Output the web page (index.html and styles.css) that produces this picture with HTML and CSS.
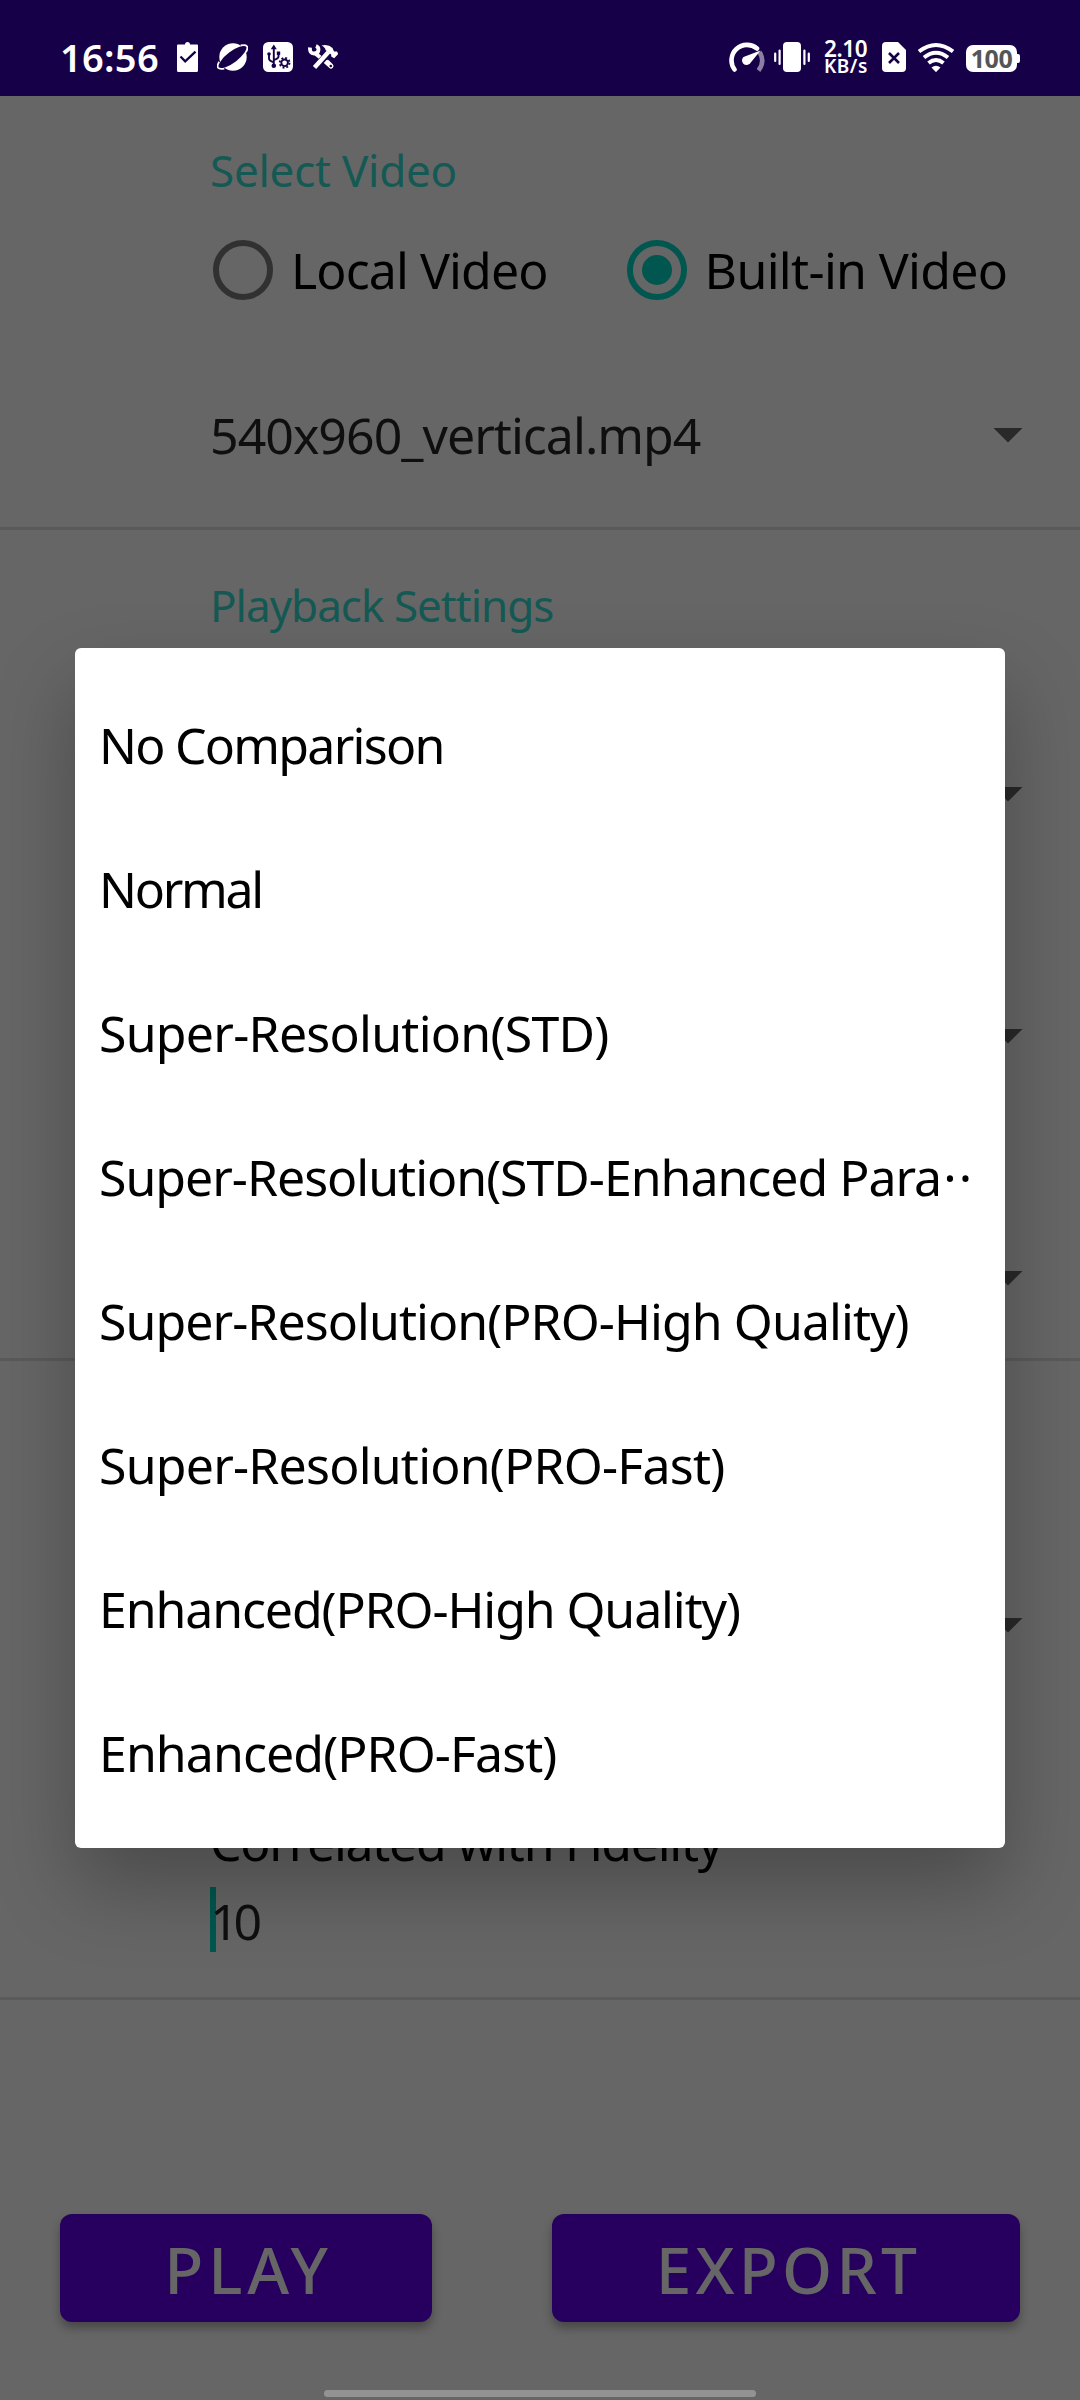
FILE: index.html
```
<!DOCTYPE html>
<html lang="en">
<head>
<meta charset="utf-8">
<title>Video settings</title>
<link rel="stylesheet" href="styles.css">
</head>
<body>
<div class="screen">
  <header class="status">
    <div class="status-left">
      <span class="time">16:56</span>
      <svg class="clip" width="21" height="30" viewBox="177 42 21 30"><path fill="#fff" d="M178 44.5h7q0-2.500 2.500-2.500t2.500 2.500h7q1 0 1 1V70.500q0 1.500-1.500 1.500h-18q-1.500 0-1.500-1.500V45.500q0-1 1-1z"/><path fill="none" stroke="#160048" stroke-width="2.300" d="M180.500 56.500l4.700 4.900 10.300-9.800"/></svg>
      <svg width="31" height="30" viewBox="217 42 31 30"><circle cx="233" cy="57" r="13.700" fill="#fff"/><g transform="rotate(-37 232.500 57)"><ellipse cx="232.500" cy="57" rx="16.500" ry="5.500" fill="#160048"/><path fill="none" stroke="#fff" stroke-width="1.800" d="M219 52.700q-4.500 2-4.500 4.300t4.500 4.300M246 52.700q4.500 2 4.500 4.300t-4.500 4.300"/></g></svg>
      <svg width="30" height="30" viewBox="263 42 30 30"><rect x="263" y="42" width="30" height="30" rx="5.500" fill="#fff"/><g fill="none" stroke="#160048" stroke-width="1.900"><path d="M273.800 48v17.500M269 54v4.500q0 2.500 4.800 3.800M278.500 53v3.500q0 2-4.700 3.600"/><circle cx="284.600" cy="62.800" r="3.300"/><circle cx="284.600" cy="62.800" r="4.900" stroke-dasharray="1.900 1.950"/></g><g fill="#160048"><path d="M273.800 44.500l3 4.700h-6z"/><circle cx="269" cy="54" r="1.800"/><path d="M276.800 51.500h3.400v3.400h-3.400z"/><circle cx="273.800" cy="65.800" r="2.300"/></g></svg>
      <svg width="30" height="30" viewBox="308 42 30 30"><path fill="none" stroke="#fff" stroke-width="4" d="M315.500 53.500l15.500 13"/><path fill="none" stroke="#fff" stroke-width="5" d="M327.500 62.500l3.500 3.500" stroke-linecap="round"/><circle cx="330.800" cy="66" r="1.300" fill="#160048"/><path fill="none" stroke="#fff" stroke-width="3.800" d="M310 47.500q-.5 6 4 6t4.500-4q0-2.500-2.500-3.500"/><path fill="none" stroke="#160048" stroke-width="6.500" d="M320 62.300l5.500-6"/><path fill="none" stroke="#fff" stroke-width="4.400" d="M314.500 67.500l14-15.500"/><path fill="#fff" d="M321.500 45.500q7-1.500 11 2.500l1.500 3.500h3l1.200 2.500-4 4.200-3-1.700v-2l-5.700-4.500q0-2.500-4-4.500z"/></svg>
    </div>
    <div class="status-right">
      <svg width="36" height="30" viewBox="729 42 36 30"><path fill="none" stroke="#fff" stroke-width="4.600" stroke-linecap="round" d="M734.500 69.500A15.500 15.500 0 0 1 757 48.500"/><path fill="none" stroke="#8b80a3" stroke-width="4.600" d="M759.500 52q6 9.500-1 18.500"/><path fill="#fff" d="M760.500 50.500L750 63.500a4.600 4.600 0 1 1-6.500-6.500z"/></svg>
      <svg class="vibrate" width="36" height="30" viewBox="774 42 36 30"><rect x="783" y="42" width="18" height="30" rx="4" fill="#fff"/><path stroke="#fff" stroke-width="2.200" stroke-linecap="round" d="M775.200 53.500v7.500M779.600 50.500v13.500M804.400 50.500v13.500M808.800 53.500v7.500"/></svg>
      <div class="net"><span class="rate">2.10</span><span class="unit">KB/s</span></div>
      <svg class="sim" width="24" height="30" viewBox="882 42 24 30"><path fill="#fff" d="M886 42h12l8 8v18q0 4-4 4h-16q-4 0-4-4V46q0-4 4-4z"/><path stroke="#160048" stroke-width="2.600" d="M889 53l10 10M899 53l-10 10"/></svg>
      <svg width="36" height="30" viewBox="918 42 36 30"><g fill="none" stroke="#fff" stroke-width="3.900"><path d="M919 51.500q17-13 34 0"/><path d="M924 57.500q12-9.500 24 0"/><path d="M928.500 63q7.500-6 15 0"/></g><path fill="#fff" d="M931.500 67.500q4.500-3.500 9 0l-4.500 4.700z"/></svg>
      <div class="battery">100</div>
    </div>
  </header>

  <main>
    <section class="block source">
      <h2 class="label select">Select Video</h2>
      <div class="radios">
        <div class="radio"><span class="ring"></span><span class="local">Local Video</span></div>
        <div class="radio on"><span class="ring"></span><span class="builtin">Built-in Video</span></div>
      </div>
      <div class="spinner"><span class="file">540x960_vertical.mp4</span><i class="arrow"></i></div>
    </section>
    <section class="block playback">
      <h2 class="label settings">Playback Settings</h2>
      <div class="spinners">
        <div class="spinner"><i class="arrow"></i></div>
        <div class="spinner"><i class="arrow"></i></div>
        <div class="spinner"><i class="arrow"></i></div>
      </div>
    </section>
    <section class="block quality">
      <div class="spinner"><i class="arrow"></i></div>
      <div class="fidelity">Correlated with Fidelity</div>
      <div class="field">10</div>
    </section>
    <section class="actions">
      <button class="btn play">PLAY</button>
      <button class="btn export">EXPORT</button>
    </section>
  </main>
  <div class="home"></div>

  <ul class="dialog">
    <li class="o1">No Comparison</li>
    <li class="o2">Normal</li>
    <li class="o3">Super-Resolution(STD)</li>
    <li class="o4">Super-Resolution(STD-Enhanced Para<span class="dots">··</span></li>
    <li class="o5">Super-Resolution(PRO-High Quality)</li>
    <li class="o6">Super-Resolution(PRO-Fast)</li>
    <li class="o7">Enhanced(PRO-High Quality)</li>
    <li class="o8">Enhanced(PRO-Fast)</li>
  </ul>
</div>
</body>
</html>
```
FILE: styles.css
```
* { box-sizing: border-box; margin: 0; padding: 0; }
body { font-family: "Noto Sans", sans-serif; font-size: 50px; color: #000; background: #666; }
.screen { position: relative; width: 1080px; height: 2400px; overflow: hidden; display: flex; flex-direction: column; background: #666; white-space: nowrap; }
svg { display: block; flex: none; }

.status { height: 96px; padding: 18px 60px 0 60px; display: flex; justify-content: space-between; align-items: center; background: #160048; color: #fff; flex: none; }
.status-left, .status-right { display: flex; align-items: center; height: 78px; }
.status-left { gap: 15px; }
.time { width: 102px; font-size: 38px; font-weight: 600; line-height: 50px; letter-spacing: 0.3px; }
.clip { margin-right: 4px; }
.status-right { gap: 12px; }
.vibrate { margin-left: -3px; }
.net { width: 44px; margin: 0 2px; display: flex; flex-direction: column; font-weight: 600; }
.rate { font-size: 22.500px; line-height: 19px; letter-spacing: -0.4px; }
.unit { font-size: 19px; line-height: 17px; letter-spacing: 0.5px; }
.battery { position: relative; width: 51px; height: 27px; margin: 3px 3px 0 0; border-radius: 7px; background: #fff; color: #555; font-size: 25px; font-weight: 700; line-height: 26px; text-align: center; letter-spacing: -0.4px; }
.battery::after { content: ""; position: absolute; left: 51px; top: 9px; width: 3px; height: 9px; border-radius: 0 2px 2px 0; background: #fff; }

.block { padding-left: 210px; border-bottom: 3px solid #5a5a5a; }
.source { height: 434px; padding-top: 44px; }
.playback { height: 831px; padding-top: 45px; }
.quality { height: 639px; padding-top: 228px; }
.label { height: 60px; line-height: 61px; font-size: 44px; font-weight: 400; color: #145953; }
.select { letter-spacing: -0.24px; }
.settings { letter-spacing: -1px; }
.radios { height: 90px; margin-top: 25px; display: flex; gap: 76px; }
.radio { display: flex; align-items: center; gap: 18px; padding-left: 3px; line-height: 92px; }
.ring { width: 60px; height: 60px; border: 6px solid #313131; border-radius: 50%; display: flex; align-items: center; justify-content: center; }
.on .ring { border-color: #01574f; }
.on .ring::after { content: ""; width: 30px; height: 30px; border-radius: 50%; background: #01574f; }
.local { letter-spacing: -0.9px; }
.builtin { letter-spacing: -0.68px; }
.spinner { height: 72px; line-height: 74px; padding-right: 57px; display: flex; align-items: center; }
.source .spinner { margin-top: 84px; }
.file { letter-spacing: -0.97px; color: #0f0f0f; }
.arrow { margin-left: auto; width: 30px; height: 15px; background: #292929; clip-path: polygon(0 0, 100% 0, 50% 100%); }
.spinners { margin-top: 123px; display: flex; flex-direction: column; gap: 170px; }
.fidelity { height: 60px; margin-top: 150px; line-height: 62px; letter-spacing: -1.28px; }
.field { height: 65px; margin-top: 16px; line-height: 68px; letter-spacing: -5px; color: #0f0f0f; background: linear-gradient(#01574f, #01574f) no-repeat 0 0 / 6px 100%; }
.actions { padding: 214px 60px 0; display: flex; gap: 120px; }
.btn { height: 108px; border: 0; border-radius: 12px; background: #27005f; color: #666; font: 500 64px/108px "Noto Sans", sans-serif; box-shadow: 0 6px 10px rgba(0,0,0,.3); text-align: center; padding: 2px 0 0 5px; }
.play { width: 372px; letter-spacing: 5px; }
.export { width: 468px; letter-spacing: 4.200px; }
.home { margin: auto auto 3px; width: 432px; height: 7px; border-radius: 4px; background: #939393; }

.dialog { position: absolute; left: 75px; top: 648px; width: 930px; height: 1200px; padding: 24px; list-style: none; background: #fff; border-radius: 6px; box-shadow: 0 38px 80px rgba(0,0,0,.27); }
.dialog li { height: 144px; line-height: 146px; }
.o1 { letter-spacing: -1.75px; }
.o2 { letter-spacing: -2.3px; }
.o3 { letter-spacing: -0.75px; }
.o4 { letter-spacing: -1.020px; }
.o5 { letter-spacing: -0.95px; }
.o6 { letter-spacing: -0.79px; }
.o7 { letter-spacing: -1.12px; }
.o8 { letter-spacing: -0.92px; }
.dots { letter-spacing: 2.200px; margin-left: 2px; }
```
